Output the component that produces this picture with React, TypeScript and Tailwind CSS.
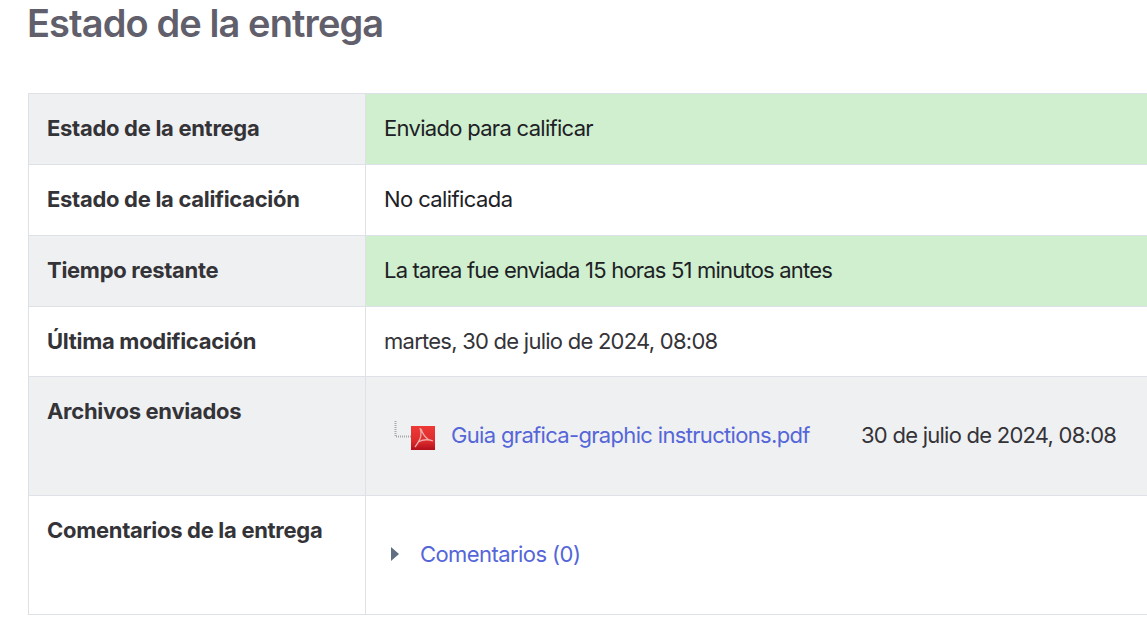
const font = { fontFamily: "Inter, 'Liberation Sans', sans-serif" };

function Row({ label, h, bg, cellBg, children }: { label: string; h: string; bg: string; cellBg: string; children: React.ReactNode }) {
  return (
    <div className={`flex border-b border-[#dee2e6] ${h}`}>
      <div className={`w-[337px] shrink-0 border-r border-[#dee2e6] pl-[18px] pt-[20px] text-[22px] leading-[28px] font-bold tracking-[-0.3px] text-[#343338] ${bg}`}>
        {label}
      </div>
      <div className={`flex-1 ${cellBg}`}>{children}</div>
    </div>
  );
}

export default function App() {
  return (
    <div className="h-[633px] w-[1147px] overflow-hidden bg-white" style={font}>
      <h2 className="pl-[27px] pt-[1px] pb-[1px] text-[38px] leading-[44px] font-semibold tracking-[-0.9px] text-[#615f6b]">
        Estado de la entrega
      </h2>
      <div className="ml-[28px] mt-[47px] border-l border-t border-[#dee2e6]">
        <Row label="Estado de la entrega" h="h-[71px]" bg="bg-[#eff0f2]" cellBg="bg-[#cfefcf]">
          <div className="pl-[18px] pt-[20px] text-[22px] leading-[28px] tracking-[-0.7px] text-[#1d2125]">Enviado para calificar</div>
        </Row>
        <Row label="Estado de la calificación" h="h-[71px]" bg="bg-white" cellBg="bg-white">
          <div className="pl-[18px] pt-[20px] text-[22px] leading-[28px] tracking-[-0.6px] text-[#1d2125]">No calificada</div>
        </Row>
        <Row label="Tiempo restante" h="h-[71px]" bg="bg-[#eff0f2]" cellBg="bg-[#cfefcf]">
          <div className="pl-[18px] pt-[20px] text-[22px] leading-[28px] tracking-[-0.8px] text-[#1d2125]">La tarea fue enviada 15 horas 51 minutos antes</div>
        </Row>
        <Row label="Última modificación" h="h-[70px]" bg="bg-white" cellBg="bg-white">
          <div className="pl-[18px] pt-[20px] text-[22px] leading-[28px] tracking-[-0.75px] text-[#343338]">martes, 30 de julio de 2024, 08:08</div>
        </Row>
        <Row label="Archivos enviados" h="h-[119px]" bg="bg-[#eff0f2]" cellBg="bg-[#eff0f2]">
          <div className="flex items-start pl-[28px] pt-[44px]">
            <svg width="42" height="30" viewBox="0 0 42 30" className="shrink-0">
              <defs>
                <linearGradient id="pdf" x1="0" y1="0" x2="0" y2="1">
                  <stop offset="0" stopColor="#ee3a36" />
                  <stop offset="0.65" stopColor="#dc2a2c" />
                  <stop offset="1" stopColor="#b30f1c" />
                </linearGradient>
              </defs>
              <path d="M1.5 0V15.5H17" fill="none" stroke="#a8a8a8" strokeWidth="2" strokeDasharray="1 1" />
              <rect x="17" y="5" width="24" height="24" fill="url(#pdf)" />
              <path d="M26 7c2.5 6 1 11-5 19M24 21c5-2.5 10-3 15-1M27 8c2 6 5 9 8 11" fill="none" stroke="#eeaaa8" strokeWidth="1.3" />
            </svg>
            <span className="ml-[15px] w-[410px] shrink-0 text-[22px] leading-[28px] tracking-[-0.67px] text-[#5566d8]">Guia grafica-graphic instructions.pdf</span>
            <span className="text-[22px] leading-[28px] tracking-[-0.75px] text-[#343338]">30 de julio de 2024, 08:08</span>
          </div>
        </Row>
        <Row label="Comentarios de la entrega" h="h-[119px]" bg="bg-white" cellBg="bg-white">
          <div className="flex items-center pl-[25px] pt-[44px]">
            <svg width="9" height="14" viewBox="0 0 9 14" className="shrink-0">
              <path d="M0 0L8 7L0 14Z" fill="#5f6f81" />
            </svg>
            <span className="ml-[20px] text-[22px] leading-[28px] tracking-[-0.57px] text-[#5566d8]">Comentarios (0)</span>
          </div>
        </Row>
      </div>
    </div>
  );
}
